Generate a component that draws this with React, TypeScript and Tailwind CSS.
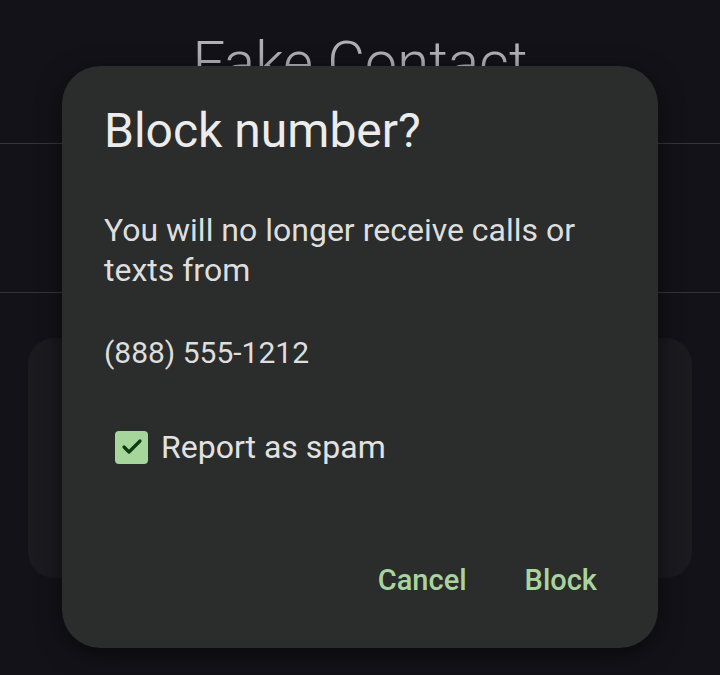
import { Check } from 'lucide-react';

export default function App() {
  return (
    <div className="relative w-[720px] h-[675px] overflow-hidden bg-[#121218] font-['Roboto',sans-serif]">
      {/* Contact page behind */}
      <div className="flex flex-col">
        <div className="h-[143px] pt-[30px] text-center">
          <span className="text-[58px] leading-[64px] font-light text-[#b0b0b4]">Fake Contact</span>
        </div>
        <div className="h-px bg-[#34343c]" />
        <div className="h-[148px]" />
        <div className="h-px bg-[#34343c]" />
        <div className="px-[28px] pt-[45px]">
          <div className="h-[240px] rounded-[26px] bg-[#1a1a1f]" />
        </div>
      </div>

      {/* Dialog */}
      <div className="absolute left-[62px] top-[66px] w-[596px] h-[582px] rounded-[38px] bg-[#2b2c2c] shadow-[0_6px_24px_rgba(0,0,0,0.5)] flex flex-col px-[42px] pt-[37px] pb-[50px]">
        <h1 className="text-[48px] leading-[56px] text-[#ececec]">Block number?</h1>
        <p className="mt-[51px] text-[32px] leading-[40px] text-[#dedede] w-[500px]">
          You will no longer receive calls or texts from
        </p>
        <p className="mt-[43px] text-[30px] leading-[40px] text-[#dedede]">(888) 555-1212</p>
        <div className="mt-[54px] ml-[11px] flex items-center gap-[13px]">
          <div className="w-[33px] h-[33px] rounded-[4px] bg-[#a6d69b] flex items-center justify-center">
            <Check size={24} strokeWidth={3.2} className="text-[#0e3a12]" />
          </div>
          <span className="text-[32px] leading-[40px] text-[#e2e2e2]">Report as spam</span>
        </div>
        <div className="mt-auto flex justify-end gap-[58px] pr-[19px]">
          <button className="text-[29px] leading-[36px] font-medium text-[#a9d49f]">Cancel</button>
          <button className="text-[29px] leading-[36px] font-medium text-[#a9d49f]">Block</button>
        </div>
      </div>
    </div>
  );
}
